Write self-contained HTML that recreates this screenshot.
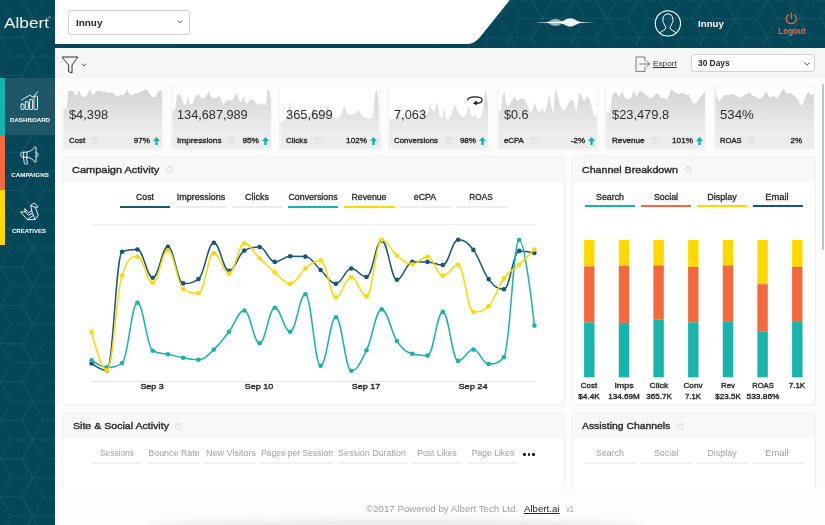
<!DOCTYPE html>
<html lang="en"><head><meta charset="utf-8"><title>Albert - Dashboard</title>
<style>

*{box-sizing:border-box;margin:0;padding:0}
html,body{width:825px;height:525px;overflow:hidden;background:#fcfcfc;font-family:"Liberation Sans", sans-serif;}
#app{position:relative;width:825px;height:525px;overflow:hidden;background:#fcfcfc}
.abs{position:absolute}
.t{position:absolute;white-space:nowrap;display:block}
svg{position:absolute;overflow:visible}
#sidebar{left:0;top:0;width:55px;height:525px;background:#054758;z-index:5}
#topbar{left:55px;top:0;width:770px;height:44.2px;background:#fff}
#topline{left:55px;top:44.2px;width:770px;height:3.5px;background:#054758}
#toolbar{left:55px;top:47.7px;width:770px;height:30.6px;background:#f6f6f6}
.sel{background:#fff;border:1px solid #d2d2d2;border-radius:3px}
.card{top:86px;width:101.4px;height:64px;background:#fff;border-radius:2.5px;overflow:hidden}
.card .foot{left:0;bottom:0;width:100%;height:19.8px;background:#ececec}
.panel{background:#fff;border:1px solid #f0f0f0;border-radius:3px;overflow:hidden}
.panel .hd{left:0;top:0;width:100%;background:#f8f8f8}
.q{position:absolute;width:7px;height:7px;border:0.7px solid #dcdcdc;border-radius:50%;font-size:4.5px;line-height:5.6px;text-align:center;color:#d4d4d4;font-style:normal}
.ul{position:absolute;height:2px}

</style></head><body><div id="app">
<nav id="sidebar" class="abs">
<svg width="55" height="525" style="left:0;top:0"><defs><pattern id="hx1" width="64.20" height="38.30" patternUnits="userSpaceOnUse" patternTransform="translate(22,18.15)"><path d="M42.80,19.15 L32.10,38.30 L10.70,38.30 L0.00,19.15 L10.70,0.00 L32.10,0.00ZM21.40,19.15L42.80,19.15M21.40,19.15L10.70,38.30M21.40,19.15L10.70,0.00M74.90,0.00 L64.20,19.15 L42.80,19.15 L32.10,0.00 L42.80,-19.15 L64.20,-19.15ZM53.50,0.00L74.90,0.00M53.50,0.00L42.80,19.15M53.50,0.00L42.80,-19.15M74.90,38.30 L64.20,57.45 L42.80,57.45 L32.10,38.30 L42.80,19.15 L64.20,19.15ZM53.50,38.30L74.90,38.30M53.50,38.30L42.80,57.45M53.50,38.30L42.80,19.15M10.70,0.00 L0.00,19.15 L-21.40,19.15 L-32.10,0.00 L-21.40,-19.15 L0.00,-19.15ZM-10.70,0.00L10.70,0.00M-10.70,0.00L-21.40,19.15M-10.70,0.00L-21.40,-19.15M10.70,38.30 L0.00,57.45 L-21.40,57.45 L-32.10,38.30 L-21.40,19.15 L0.00,19.15ZM-10.70,38.30L10.70,38.30M-10.70,38.30L-21.40,57.45M-10.70,38.30L-21.40,19.15" fill="none" stroke="#1b5968" stroke-width="0.6"/></pattern></defs><rect width="55" height="525" fill="url(#hx1)"/></svg>
<div class="abs" style="left:0;top:78px;width:55px;height:57px;background:#215a6a;opacity:0.9"></div>
<div class="abs" style="left:0;top:78px;width:4.5px;height:57px;background:#16b4aa"></div>
<div class="abs" style="left:0;top:135px;width:4.5px;height:55px;background:#f4693c"></div>
<div class="abs" style="left:0;top:190px;width:4.5px;height:55px;background:#fdd900"></div>
<span class="t" style="top:14.72px;font-size:15.1px;line-height:15.1px;font-weight:400;color:#f4f8f9;left:3.80px;transform:scaleX(1.141);transform-origin:left center;">Albert</span>
<span class="t" style="top:16.79px;font-size:3.2px;line-height:3.2px;font-weight:400;color:#fff;left:48.20px;">&#174;</span>
<svg width="20" height="20" viewBox="0 0 20 20" style="left:20px;top:91px" fill="none" stroke="#fff" stroke-width="0.9" stroke-linecap="round" stroke-linejoin="round"><path d="M1.5,9.1 L9.8,4.1 L13.1,6.3 L17.6,0.8"/><rect x="1" y="13" width="3" height="5.5" rx="0.6"/><rect x="5.3" y="10.8" width="3" height="7.700" rx="0.6"/><rect x="9.6" y="8.500" width="3" height="10" rx="0.6"/><rect x="14" y="5.200" width="3.500" height="13.300" rx="0.6"/></svg>
<span class="t" style="top:117.45px;font-size:6.2px;line-height:6.2px;font-weight:700;color:#fff;left:-120.50px;width:300px;text-align:center;transform:scaleX(0.997);transform-origin:center center;">DASHBOARD</span>
<svg width="20" height="20" viewBox="0 0 20 20" style="left:20px;top:146px" fill="none" stroke="#fff" stroke-width="0.9" stroke-linecap="round" stroke-linejoin="round"><path d="M6.6,6.2 C10.5,5.6 13.2,3.4 14.8,0.8 C15.6,0.6 16,1.2 16,2 L16,15 C16,16 15.4,16.4 14.8,16.2 C13.2,13.4 10.5,11.6 6.6,11.2"/><path d="M6.6,6.2 H2.6 C1.2,6.2 0.8,7.4 0.8,8.7 C0.8,10 1.2,11.2 2.6,11.2 H6.6 Z"/><path d="M3.6,6.4V11"/><path d="M3.4,11.4 L4.4,17.4 C4.6,18 5,18.2 5.6,18.2 H6.8 C7.4,18.2 7.6,17.8 7.4,17.2 L6.4,11.4"/><path d="M16.2,6.6 C17.6,6.8 18.2,7.8 18.2,8.6 C18.2,9.6 17.6,10.4 16.2,10.6"/></svg>
<span class="t" style="top:172.35px;font-size:6.2px;line-height:6.2px;font-weight:700;color:#fff;left:-120.50px;width:300px;text-align:center;transform:scaleX(1.006);transform-origin:center center;">CAMPAIGNS</span>
<svg width="20" height="20" viewBox="0 0 20 20" style="left:20px;top:202px" fill="none" stroke="#fff" stroke-width="0.9" stroke-linecap="round" stroke-linejoin="round"><path d="M0.8,10.2 L7.4,17.6 H15 L18.2,13.4 L15.4,5.4 L18.2,5 L14,0.8 L10.8,3.6 L11.6,8.6 L8.8,10.8 L4.6,6.6 L5.4,9.6 Z"/><path d="M10.8,3.6 L15.4,5.4 M11.6,8.6 L15,17.6 M5.4,9.6 L8.2,13.2 L11.8,11.6 M7.4,17.6 L13,13.6"/></svg>
<span class="t" style="top:227.75px;font-size:6.2px;line-height:6.2px;font-weight:700;color:#fff;left:-120.60px;width:300px;text-align:center;transform:scaleX(0.970);transform-origin:center center;">CREATIVES</span>
</nav>
<header id="topbar" class="abs"></header><div id="topline" class="abs"></div>
<svg width="825" height="48" viewBox="0 0 825 48" style="left:0;top:0"><defs><pattern id="hx2" width="64.20" height="38.30" patternUnits="userSpaceOnUse" patternTransform="translate(50.2,-0.55)"><path d="M42.80,19.15 L32.10,38.30 L10.70,38.30 L0.00,19.15 L10.70,0.00 L32.10,0.00ZM21.40,19.15L42.80,19.15M21.40,19.15L10.70,38.30M21.40,19.15L10.70,0.00M74.90,0.00 L64.20,19.15 L42.80,19.15 L32.10,0.00 L42.80,-19.15 L64.20,-19.15ZM53.50,0.00L74.90,0.00M53.50,0.00L42.80,19.15M53.50,0.00L42.80,-19.15M74.90,38.30 L64.20,57.45 L42.80,57.45 L32.10,38.30 L42.80,19.15 L64.20,19.15ZM53.50,38.30L74.90,38.30M53.50,38.30L42.80,57.45M53.50,38.30L42.80,19.15M10.70,0.00 L0.00,19.15 L-21.40,19.15 L-32.10,0.00 L-21.40,-19.15 L0.00,-19.15ZM-10.70,0.00L10.70,0.00M-10.70,0.00L-21.40,19.15M-10.70,0.00L-21.40,-19.15M10.70,38.30 L0.00,57.45 L-21.40,57.45 L-32.10,38.30 L-21.40,19.15 L0.00,19.15ZM-10.70,38.30L10.70,38.30M-10.70,38.30L-21.40,57.45M-10.70,38.30L-21.40,19.15" fill="none" stroke="#1b5968" stroke-width="0.6"/></pattern><clipPath id="hc"><path d="M509.8,0 L485,31 C479.5,38 475,44.3 466,44.3 L440,44.3 L440,47.7 L825,47.7 L825,0 Z"/></clipPath><radialGradient id="gl" cx="50%" cy="50%" r="50%"><stop offset="0" stop-color="#fff" stop-opacity="0.95"/><stop offset="1" stop-color="#fff" stop-opacity="0"/></radialGradient><filter id="bl" x="-20%" y="-50%" width="140%" height="200%"><feGaussianBlur stdDeviation="0.35"/></filter></defs><path d="M509.8,0 L485,31 C479.5,38 475,44.3 466,44.3 L440,44.3 L440,47.7 L825,47.7 L825,0 Z" fill="#054758"/><g clip-path="url(#hc)"><rect x="440" y="0" width="385" height="44" fill="url(#hx2)"/></g><path d="M533.5,22.4 Q564.5,21.2 595.5,22.4 Q564.5,23.600 533.5,22.4Z" fill="#d5e3e6"/><path d="M544.5,22.4 C550,21.8 551,18.9 555.5,18.9 C560,18.9 561,21.8 566.5,22.4 C561,23 560,25.900 555.5,25.900 C551,25.900 550,23 544.5,22.4Z" fill="#fff" fill-opacity="0.6" filter="url(#bl)"/><path d="M558,22.4 C564.5,21.600 565.5,18.300 570.2,18.300 C575,18.300 576,21.600 583,22.4 C576,23.200 575,26.500 570.2,26.500 C565.5,26.500 564.5,23.200 558,22.4Z" fill="#fff" fill-opacity="0.92" filter="url(#bl)"/><circle cx="667.9" cy="23.4" r="12.6" fill="none" stroke="#fff" stroke-width="1.1"/><path d="M660.3,32.4 C662,30.6 665.8,30 665.8,27.8 C665.8,26.5 664.6,25.8 663.9,23.5 C663.2,22.8 662.7,21 662.9,19 C663.1,15.8 665.2,13.9 667.9,13.9 C670.6,13.9 672.7,15.8 672.9,19 C673.1,21 672.6,22.8 671.9,23.500 C671.200,25.800 670,26.500 670,27.800 C670,30 673.800,30.600 675.500,32.400" fill="none" stroke="#fff" stroke-width="1" stroke-linejoin="round" stroke-linecap="round"/><path d="M788.4,14.8 a4.9,4.9 0 1 0 5.6,0" fill="none" stroke="#f4693c" stroke-width="1.2" stroke-linecap="round"/><path d="M791.2,13v5.3" stroke="#f4693c" stroke-width="1.2" stroke-linecap="round"/></svg>
<span class="t" style="top:19.29px;font-size:9.7px;line-height:9.7px;font-weight:700;color:#fff;left:697.80px;transform:scaleX(1.002);transform-origin:left center;">Innuy</span>
<span class="t" style="top:28.26px;font-size:8.2px;line-height:8.2px;font-weight:700;color:#f4693c;left:641.50px;width:300px;text-align:center;transform:scaleX(0.992);transform-origin:center center;">Logout</span>
<div class="abs sel" style="left:68.4px;top:9.5px;width:121.2px;height:25px"></div>
<span class="t" style="top:17.77px;font-size:9.6px;line-height:9.6px;font-weight:700;color:#262626;left:76.30px;transform:scaleX(1.032);transform-origin:left center;">Innuy</span>
<svg width="8" height="6" viewBox="0 0 8 6" style="left:176.1px;top:19.2px"><path d="M1.8,1.6 L4,3.9 L6.2,1.6" fill="none" stroke="#444" stroke-width="0.9"/></svg>
<div id="toolbar" class="abs"></div>
<svg width="18" height="18" viewBox="0 0 18 18" style="left:61px;top:55.500px" fill="none" stroke="#333" stroke-width="1" stroke-linejoin="round"><path d="M1,1 H17 L11,9 V17 L7.6,15.6 V9 Z"/></svg>
<svg width="6" height="4" viewBox="0 0 6 4" style="left:80.5px;top:62.5px"><path d="M0.8,0.8 L3,3 L5.2,0.8" fill="none" stroke="#444" stroke-width="0.9"/></svg>
<svg width="16" height="16" viewBox="0 0 16 16" style="left:634.5px;top:55.5px" fill="none" stroke="#555" stroke-width="0.75" stroke-linejoin="round" stroke-linecap="round"><path d="M10,5 V1 H1 V15.4 H10 V11"/><path d="M4.8,8 H14.6 M12,5.4 L14.6,8 L12,10.600"/></svg>
<span class="t" style="top:60.38px;font-size:7.7px;line-height:7.7px;font-weight:400;color:#333;left:653.40px;transform:scaleX(1.071);transform-origin:left center;text-decoration:underline;text-decoration-thickness:0.6px;text-underline-offset:1px;">Export</span>
<div class="abs sel" style="left:690.5px;top:54.4px;width:124.3px;height:18.1px"></div>
<span class="t" style="top:59.30px;font-size:8.5px;line-height:8.5px;font-weight:700;color:#262626;left:698.20px;transform:scaleX(0.983);transform-origin:left center;">30 Days</span>
<svg width="8" height="6" viewBox="0 0 8 6" style="left:802.8px;top:61.2px"><path d="M1.3,1.5 L4,4.2 L6.7,1.5" fill="none" stroke="#444" stroke-width="0.9"/></svg>
<section class="abs card" style="left:62.0px">
<svg width="101.4" height="64" viewBox="0 0 101.4 64" style="left:0;top:0"><defs><linearGradient id="cg0" gradientUnits="userSpaceOnUse" x1="0" y1="0" x2="0" y2="64"><stop offset="0" stop-color="#d2d2d2"/><stop offset="0.62" stop-color="#e9e9e9"/><stop offset="1" stop-color="#ececec"/></linearGradient></defs><path d="M0,64 L0.7,24.7 L4.7,22.0 L6.4,5.3 L9.3,4.7 L11.3,5.3 L13.3,9.3 L15.3,8.7 L17.1,4.0 L18.9,9.3 L21.3,10.7 L24.0,10.7 L26.0,7.3 L27.7,3.3 L29.3,7.3 L31.7,8.7 L34.0,5.3 L37.3,4.7 L40.7,6.0 L44.0,6.0 L47.3,6.7 L50.7,6.7 L53.3,9.3 L56.0,10.7 L58.7,8.7 L61.3,9.3 L64.0,6.0 L65.6,2.7 L67.3,8.7 L70.0,9.3 L72.7,7.3 L76.0,7.3 L80.0,5.3 L82.9,3.3 L85.1,4.0 L87.3,7.3 L90.0,10.7 L93.3,11.3 L96.0,6.0 L97.6,4.7 L101.3,5.3 L101.4,64 Z" fill="url(#cg0)" stroke="none"/></svg>
<div class="abs foot"></div>
<svg width="101.4" height="64" viewBox="0 0 101.4 64" style="left:0;top:0"><rect x="0.9" y="0.9" width="99.60000000000001" height="62.2" rx="1.6" fill="none" stroke="#fff" stroke-width="1.1"/><rect x="0.4" y="0.4" width="100.60000000000001" height="63.2" rx="2.2" fill="none" stroke="#eeeeee" stroke-width="0.8"/></svg>
<span class="t" style="top:22.87px;font-size:12.2px;line-height:12.2px;font-weight:400;color:#2e2e2e;left:6.70px;transform:scaleX(1.051);transform-origin:left center;">$4,398</span>
<span class="t" style="top:50.61px;font-size:7.9px;line-height:7.9px;font-weight:400;color:#262626;-webkit-text-stroke:0.35px #262626;left:6.70px;transform:scaleX(0.998);transform-origin:left center;">Cost</span>
<i class="q" style="left:29.3px;top:51.2px">?</i>
<span class="t" style="top:50.61px;font-size:7.9px;line-height:7.9px;font-weight:400;color:#262626;-webkit-text-stroke:0.35px #262626;left:-211.90px;width:300px;text-align:right;transform:scaleX(1.026);transform-origin:right center;">97%</span>
<svg width="7" height="8" viewBox="0 0 7 8" style="left:91.2px;top:51px"><path d="M3.5,0 L7,3.9 H4.700 V8 H2.300 V3.900 H0 Z" fill="#16b4aa"/></svg>
</section>
<section class="abs card" style="left:170.6px">
<svg width="101.4" height="64" viewBox="0 0 101.4 64" style="left:0;top:0"><defs><linearGradient id="cg1" gradientUnits="userSpaceOnUse" x1="0" y1="0" x2="0" y2="64"><stop offset="0" stop-color="#d2d2d2"/><stop offset="0.62" stop-color="#e9e9e9"/><stop offset="1" stop-color="#ececec"/></linearGradient></defs><path d="M0,64 L0.5,24.7 L4.1,24.0 L5.8,9.3 L8.7,8.7 L10.7,12.7 L13.4,19.3 L15.4,18.0 L17.0,10.0 L18.7,18.0 L21.4,18.0 L24.1,11.3 L27.4,8.0 L30.3,12.0 L33.4,12.0 L36.1,8.7 L38.1,5.3 L40.1,11.3 L42.7,12.7 L46.1,11.3 L48.7,10.0 L50.7,15.3 L52.7,19.3 L54.7,14.7 L58.1,14.0 L60.7,14.7 L63.4,11.3 L65.8,7.3 L68.1,14.0 L70.1,16.7 L72.5,10.0 L74.3,16.7 L76.7,18.0 L79.1,12.7 L82.1,14.0 L84.7,16.7 L87.4,18.7 L90.7,17.3 L93.4,19.3 L95.1,18.0 L96.7,4.0 L98.1,3.3 L99.7,12.7 L101.4,18.0 L101.4,64 Z" fill="url(#cg1)" stroke="none"/></svg>
<div class="abs foot"></div>
<svg width="101.4" height="64" viewBox="0 0 101.4 64" style="left:0;top:0"><rect x="0.9" y="0.9" width="99.60000000000001" height="62.2" rx="1.6" fill="none" stroke="#fff" stroke-width="1.1"/><rect x="0.4" y="0.4" width="100.60000000000001" height="63.2" rx="2.2" fill="none" stroke="#eeeeee" stroke-width="0.8"/></svg>
<span class="t" style="top:22.87px;font-size:12.2px;line-height:12.2px;font-weight:400;color:#2e2e2e;left:6.70px;transform:scaleX(1.043);transform-origin:left center;">134,687,989</span>
<span class="t" style="top:50.61px;font-size:7.9px;line-height:7.9px;font-weight:400;color:#262626;-webkit-text-stroke:0.35px #262626;left:6.70px;transform:scaleX(1.048);transform-origin:left center;">Impressions</span>
<i class="q" style="left:57.7px;top:51.2px">?</i>
<span class="t" style="top:50.61px;font-size:7.9px;line-height:7.9px;font-weight:400;color:#262626;-webkit-text-stroke:0.35px #262626;left:-211.90px;width:300px;text-align:right;transform:scaleX(1.051);transform-origin:right center;">95%</span>
<svg width="7" height="8" viewBox="0 0 7 8" style="left:91.2px;top:51px"><path d="M3.5,0 L7,3.9 H4.700 V8 H2.300 V3.900 H0 Z" fill="#16b4aa"/></svg>
</section>
<section class="abs card" style="left:279.3px">
<svg width="101.4" height="64" viewBox="0 0 101.4 64" style="left:0;top:0"><defs><linearGradient id="cg2" gradientUnits="userSpaceOnUse" x1="0" y1="0" x2="0" y2="64"><stop offset="0" stop-color="#d2d2d2"/><stop offset="0.62" stop-color="#e9e9e9"/><stop offset="1" stop-color="#ececec"/></linearGradient></defs><path d="M0,64 L0.0,35.3 L3.7,36.0 L6.1,32.7 L8.4,30.0 L10.4,15.3 L12.4,29.3 L15.7,30.7 L19.7,30.7 L24.4,30.7 L30.4,30.0 L32.8,26.0 L34.6,19.3 L36.4,26.7 L39.0,28.0 L41.7,20.0 L43.4,26.7 L46.4,26.0 L48.4,18.7 L50.4,26.7 L53.0,29.3 L56.4,31.3 L59.0,34.0 L62.4,28.0 L65.3,19.3 L67.7,26.7 L70.4,29.3 L74.4,28.0 L77.0,26.7 L79.7,24.0 L82.4,29.3 L86.4,32.0 L90.4,33.3 L93.7,31.3 L95.7,11.3 L97.3,2.7 L99.0,11.3 L101.0,31.3 L101.4,64 Z" fill="url(#cg2)" stroke="none"/></svg>
<div class="abs foot"></div>
<svg width="101.4" height="64" viewBox="0 0 101.4 64" style="left:0;top:0"><rect x="0.9" y="0.9" width="99.60000000000001" height="62.2" rx="1.6" fill="none" stroke="#fff" stroke-width="1.1"/><rect x="0.4" y="0.4" width="100.60000000000001" height="63.2" rx="2.2" fill="none" stroke="#eeeeee" stroke-width="0.8"/></svg>
<span class="t" style="top:22.87px;font-size:12.2px;line-height:12.2px;font-weight:400;color:#2e2e2e;left:6.70px;transform:scaleX(1.060);transform-origin:left center;">365,699</span>
<span class="t" style="top:50.61px;font-size:7.9px;line-height:7.9px;font-weight:400;color:#262626;-webkit-text-stroke:0.35px #262626;left:6.70px;transform:scaleX(1.017);transform-origin:left center;">Clicks</span>
<i class="q" style="left:34.5px;top:51.2px">?</i>
<span class="t" style="top:50.61px;font-size:7.9px;line-height:7.9px;font-weight:400;color:#262626;-webkit-text-stroke:0.35px #262626;left:-211.90px;width:300px;text-align:right;transform:scaleX(1.035);transform-origin:right center;">102%</span>
<svg width="7" height="8" viewBox="0 0 7 8" style="left:91.2px;top:51px"><path d="M3.5,0 L7,3.9 H4.700 V8 H2.300 V3.900 H0 Z" fill="#16b4aa"/></svg>
</section>
<section class="abs card" style="left:387.6px">
<svg width="101.4" height="64" viewBox="0 0 101.4 64" style="left:0;top:0"><defs><linearGradient id="cg3" gradientUnits="userSpaceOnUse" x1="0" y1="0" x2="0" y2="64"><stop offset="0" stop-color="#d2d2d2"/><stop offset="0.62" stop-color="#e9e9e9"/><stop offset="1" stop-color="#ececec"/></linearGradient></defs><path d="M0,64 L0.0,33.3 L4.7,33.3 L8.7,32.0 L10.7,18.0 L12.5,31.3 L16.7,32.0 L22.1,32.0 L27.4,31.3 L32.1,28.7 L34.7,20.0 L36.7,26.7 L39.4,28.7 L42.1,18.7 L44.1,24.0 L46.7,26.7 L49.0,15.3 L51.4,28.7 L54.1,32.7 L56.1,21.3 L58.1,33.3 L60.7,34.0 L64.1,26.7 L66.7,18.7 L69.4,24.7 L72.1,29.3 L75.4,30.7 L78.1,29.3 L80.7,19.3 L82.7,28.0 L84.7,31.3 L87.4,28.7 L89.4,33.3 L92.7,32.0 L95.4,22.0 L97.4,2.7 L99.1,11.3 L101.4,31.3 L101.4,64 Z" fill="url(#cg3)" stroke="none"/></svg>
<div class="abs foot"></div>
<svg width="101.4" height="64" viewBox="0 0 101.4 64" style="left:0;top:0"><rect x="0.9" y="0.9" width="99.60000000000001" height="62.2" rx="1.6" fill="none" stroke="#fff" stroke-width="1.1"/><rect x="0.4" y="0.4" width="100.60000000000001" height="63.2" rx="2.2" fill="none" stroke="#eeeeee" stroke-width="0.8"/></svg>
<span class="t" style="top:22.87px;font-size:12.2px;line-height:12.2px;font-weight:400;color:#2e2e2e;left:6.70px;transform:scaleX(1.049);transform-origin:left center;">7,063</span>
<span class="t" style="top:50.61px;font-size:7.9px;line-height:7.9px;font-weight:400;color:#262626;-webkit-text-stroke:0.35px #262626;left:6.70px;transform:scaleX(1.003);transform-origin:left center;">Conversions</span>
<i class="q" style="left:57.1px;top:51.2px">?</i>
<span class="t" style="top:50.61px;font-size:7.9px;line-height:7.9px;font-weight:400;color:#262626;-webkit-text-stroke:0.35px #262626;left:-211.90px;width:300px;text-align:right;transform:scaleX(1.019);transform-origin:right center;">98%</span>
<svg width="7" height="8" viewBox="0 0 7 8" style="left:91.2px;top:51px"><path d="M3.5,0 L7,3.9 H4.700 V8 H2.300 V3.900 H0 Z" fill="#16b4aa"/></svg>
</section>
<section class="abs card" style="left:496.9px">
<svg width="101.4" height="64" viewBox="0 0 101.4 64" style="left:0;top:0"><defs><linearGradient id="cg4" gradientUnits="userSpaceOnUse" x1="0" y1="0" x2="0" y2="64"><stop offset="0" stop-color="#d2d2d2"/><stop offset="0.62" stop-color="#e9e9e9"/><stop offset="1" stop-color="#ececec"/></linearGradient></defs><path d="M0,64 L0.0,25.3 L3.8,24.7 L5.8,10.0 L7.4,6.0 L9.1,18.0 L11.8,20.0 L14.4,15.3 L17.5,10.7 L20.4,14.7 L23.1,12.7 L27.1,12.7 L30.0,18.0 L33.1,26.7 L35.8,24.0 L38.0,16.7 L40.4,24.7 L42.8,26.0 L45.1,22.0 L47.4,27.3 L49.8,20.7 L52.2,7.3 L54.0,20.7 L56.2,26.7 L57.8,11.3 L59.1,2.7 L61.1,12.7 L63.8,21.3 L66.4,25.3 L69.1,22.7 L71.8,16.7 L74.4,13.3 L76.4,14.7 L79.1,26.7 L81.1,15.3 L83.1,6.0 L85.5,13.3 L87.8,14.7 L90.0,10.0 L93.1,14.0 L95.8,24.7 L97.8,32.0 L101.4,24.7 L101.4,64 Z" fill="url(#cg4)" stroke="none"/></svg>
<div class="abs foot"></div>
<svg width="101.4" height="64" viewBox="0 0 101.4 64" style="left:0;top:0"><rect x="0.9" y="0.9" width="99.60000000000001" height="62.2" rx="1.6" fill="none" stroke="#fff" stroke-width="1.1"/><rect x="0.4" y="0.4" width="100.60000000000001" height="63.2" rx="2.2" fill="none" stroke="#eeeeee" stroke-width="0.8"/></svg>
<span class="t" style="top:22.87px;font-size:12.2px;line-height:12.2px;font-weight:400;color:#2e2e2e;left:6.70px;transform:scaleX(1.036);transform-origin:left center;">$0.6</span>
<span class="t" style="top:50.61px;font-size:7.9px;line-height:7.9px;font-weight:400;color:#262626;-webkit-text-stroke:0.35px #262626;left:6.70px;transform:scaleX(0.988);transform-origin:left center;">eCPA</span>
<i class="q" style="left:32.9px;top:51.2px">?</i>
<span class="t" style="top:50.61px;font-size:7.9px;line-height:7.9px;font-weight:400;color:#262626;-webkit-text-stroke:0.35px #262626;left:-211.90px;width:300px;text-align:right;transform:scaleX(1.011);transform-origin:right center;">-2%</span>
<svg width="7" height="8" viewBox="0 0 7 8" style="left:91.2px;top:51px"><path d="M3.5,0 L7,3.9 H4.700 V8 H2.300 V3.900 H0 Z" fill="#16b4aa"/></svg>
</section>
<section class="abs card" style="left:604.9px">
<svg width="101.4" height="64" viewBox="0 0 101.4 64" style="left:0;top:0"><defs><linearGradient id="cg5" gradientUnits="userSpaceOnUse" x1="0" y1="0" x2="0" y2="64"><stop offset="0" stop-color="#d2d2d2"/><stop offset="0.62" stop-color="#e9e9e9"/><stop offset="1" stop-color="#ececec"/></linearGradient></defs><path d="M0,64 L0.0,27.1 L5.3,26.4 L6.7,11.1 L9.6,6.0 L12.6,8.2 L14.0,11.8 L16.9,5.3 L19.1,10.4 L22.0,13.3 L25.6,12.5 L28.6,5.3 L31.5,10.4 L35.1,4.5 L38.7,7.5 L43.1,10.4 L46.7,12.5 L50.4,8.2 L53.3,7.5 L56.2,12.5 L59.1,11.8 L62.0,14.0 L66.4,3.1 L69.3,6.0 L73.6,8.2 L78.0,6.7 L80.9,8.9 L83.8,8.2 L88.2,17.6 L91.1,16.9 L95.5,11.1 L100.6,5.3 L101.4,6.7 L101.4,64 Z" fill="url(#cg5)" stroke="none"/></svg>
<div class="abs foot"></div>
<svg width="101.4" height="64" viewBox="0 0 101.4 64" style="left:0;top:0"><rect x="0.9" y="0.9" width="99.60000000000001" height="62.2" rx="1.6" fill="none" stroke="#fff" stroke-width="1.1"/><rect x="0.4" y="0.4" width="100.60000000000001" height="63.2" rx="2.2" fill="none" stroke="#eeeeee" stroke-width="0.8"/></svg>
<span class="t" style="top:22.87px;font-size:12.2px;line-height:12.2px;font-weight:400;color:#2e2e2e;left:6.70px;transform:scaleX(1.053);transform-origin:left center;">$23,479.8</span>
<span class="t" style="top:50.61px;font-size:7.9px;line-height:7.9px;font-weight:400;color:#262626;-webkit-text-stroke:0.35px #262626;left:6.70px;transform:scaleX(1.029);transform-origin:left center;">Revenue</span>
<i class="q" style="left:45.6px;top:51.2px">?</i>
<span class="t" style="top:50.61px;font-size:7.9px;line-height:7.9px;font-weight:400;color:#262626;-webkit-text-stroke:0.35px #262626;left:-211.90px;width:300px;text-align:right;transform:scaleX(1.040);transform-origin:right center;">101%</span>
<svg width="7" height="8" viewBox="0 0 7 8" style="left:91.2px;top:51px"><path d="M3.5,0 L7,3.9 H4.700 V8 H2.300 V3.900 H0 Z" fill="#16b4aa"/></svg>
</section>
<section class="abs card" style="left:713.6px">
<svg width="101.4" height="64" viewBox="0 0 101.4 64" style="left:0;top:0"><defs><linearGradient id="cg6" gradientUnits="userSpaceOnUse" x1="0" y1="0" x2="0" y2="64"><stop offset="0" stop-color="#d2d2d2"/><stop offset="0.62" stop-color="#e9e9e9"/><stop offset="1" stop-color="#ececec"/></linearGradient></defs><path d="M0,64 L0.0,1.3 L1.0,1.3 L2.7,11.3 L4.7,16.0 L7.4,12.7 L10.7,8.7 L14.1,9.3 L18.1,8.0 L22.1,10.0 L26.1,12.0 L30.1,9.3 L33.4,8.0 L35.4,6.0 L38.1,9.3 L41.4,10.7 L45.4,13.3 L48.1,11.3 L50.7,8.0 L52.7,6.0 L54.7,10.0 L57.4,11.3 L60.1,10.0 L62.7,12.7 L64.7,10.0 L67.4,5.3 L69.8,2.7 L72.1,7.3 L74.7,8.0 L76.7,6.7 L80.1,10.0 L83.4,12.7 L86.1,18.0 L88.1,19.3 L90.1,15.3 L92.7,8.0 L94.7,6.0 L96.7,9.3 L99.4,8.7 L101.4,5.3 L101.4,64 Z" fill="url(#cg6)" stroke="none"/></svg>
<div class="abs foot"></div>
<svg width="101.4" height="64" viewBox="0 0 101.4 64" style="left:0;top:0"><rect x="0.9" y="0.9" width="99.60000000000001" height="62.2" rx="1.6" fill="none" stroke="#fff" stroke-width="1.1"/><rect x="0.4" y="0.4" width="100.60000000000001" height="63.2" rx="2.2" fill="none" stroke="#eeeeee" stroke-width="0.8"/></svg>
<span class="t" style="top:22.87px;font-size:12.2px;line-height:12.2px;font-weight:400;color:#2e2e2e;left:6.70px;transform:scaleX(1.088);transform-origin:left center;">534%</span>
<span class="t" style="top:50.61px;font-size:7.9px;line-height:7.9px;font-weight:400;color:#262626;-webkit-text-stroke:0.35px #262626;left:6.70px;transform:scaleX(0.965);transform-origin:left center;">ROAS</span>
<i class="q" style="left:34.7px;top:51.2px">?</i>
<span class="t" style="top:50.61px;font-size:7.9px;line-height:7.9px;font-weight:400;color:#262626;-webkit-text-stroke:0.35px #262626;left:-211.90px;width:300px;text-align:right;transform:scaleX(1.008);transform-origin:right center;">2%</span>
</section>
<svg width="16" height="9" viewBox="0 0 16 9" style="left:467px;top:95.5px" fill="none" stroke="#1a1a1a" stroke-width="1.25" stroke-linecap="round" stroke-linejoin="round"><path d="M8.6,7.3 C12.6,7.2 15.1,5.9 15.1,3.9 C15.1,1.7 11.8,0.7 8,0.8 C4.2,0.9 0.9,2 0.5,4"/><path d="M9.2,5.5 L6.6,7.3 L9.4,8.5 Z" fill="#1a1a1a" stroke-width="0.9"/></svg>
<section class="abs panel" style="left:62px;top:156px;width:502.5px;height:249px">
<div class="abs hd" style="height:25px"></div>
</section>
<span class="t" style="top:164.60px;font-size:9.8px;line-height:9.8px;font-weight:400;color:#262626;-webkit-text-stroke:0.35px #262626;left:72.30px;transform:scaleX(1.121);transform-origin:left center;">Campaign Activity</span>
<i class="q" style="left:165.9px;top:166.1px">?</i>
<span class="t" style="top:192.87px;font-size:8.9px;line-height:8.9px;font-weight:400;color:#262626;-webkit-text-stroke:0.3px #262626;left:-4.90px;width:300px;text-align:center;transform:scaleX(0.981);transform-origin:center center;">Cost</span>
<i class="ul" style="left:119.8px;top:205.6px;width:50.600px;background:#17577a"></i>
<span class="t" style="top:192.87px;font-size:8.9px;line-height:8.9px;font-weight:400;color:#262626;-webkit-text-stroke:0.3px #262626;left:51.15px;width:300px;text-align:center;transform:scaleX(1.016);transform-origin:center center;">Impressions</span>
<i class="ul" style="left:175.8px;top:205.6px;width:50.600px;background:#ececec"></i>
<span class="t" style="top:192.87px;font-size:8.9px;line-height:8.9px;font-weight:400;color:#262626;-webkit-text-stroke:0.3px #262626;left:107.20px;width:300px;text-align:center;transform:scaleX(1.005);transform-origin:center center;">Clicks</span>
<i class="ul" style="left:231.9px;top:205.6px;width:50.600px;background:#ececec"></i>
<span class="t" style="top:192.87px;font-size:8.9px;line-height:8.9px;font-weight:400;color:#262626;-webkit-text-stroke:0.3px #262626;left:163.25px;width:300px;text-align:center;transform:scaleX(0.997);transform-origin:center center;">Conversions</span>
<i class="ul" style="left:287.9px;top:205.6px;width:50.600px;background:#16b4aa"></i>
<span class="t" style="top:192.87px;font-size:8.9px;line-height:8.9px;font-weight:400;color:#262626;-webkit-text-stroke:0.3px #262626;left:219.30px;width:300px;text-align:center;transform:scaleX(0.982);transform-origin:center center;">Revenue</span>
<i class="ul" style="left:344.0px;top:205.6px;width:50.600px;background:#fdd900"></i>
<span class="t" style="top:192.87px;font-size:8.9px;line-height:8.9px;font-weight:400;color:#262626;-webkit-text-stroke:0.3px #262626;left:275.35px;width:300px;text-align:center;transform:scaleX(0.994);transform-origin:center center;">eCPA</span>
<i class="ul" style="left:400.1px;top:205.6px;width:50.600px;background:#ececec"></i>
<span class="t" style="top:192.87px;font-size:8.9px;line-height:8.9px;font-weight:400;color:#262626;-webkit-text-stroke:0.3px #262626;left:331.40px;width:300px;text-align:center;transform:scaleX(0.926);transform-origin:center center;">ROAS</span>
<i class="ul" style="left:456.1px;top:205.6px;width:50.600px;background:#ececec"></i>
<svg width="825" height="525" viewBox="0 0 825 525" style="left:0;top:0">
<path d="M91,224.800 H535.500" stroke="#ececec" stroke-width="1"/><path d="M91,381.500 H535.500" stroke="#e4e4e4" stroke-width="1"/>
<path d="M91.6,363.4C91.6,363.4 100.8,370.4 106.9,370.4C113.0,370.4 116.0,253.9 122.1,251.7C128.2,249.5 131.3,249.5 137.4,249.5C143.5,249.5 146.6,277.7 152.7,277.7C158.8,277.7 161.8,246.7 167.9,246.7C174.1,246.7 177.1,283.4 183.2,283.4C189.3,283.4 192.4,283.4 198.5,279.1C204.6,274.8 207.7,242.8 213.8,242.8C219.9,242.8 222.9,270.7 229.0,270.7C235.1,270.7 238.2,254.1 244.3,250.6C250.4,247.1 253.5,247.1 259.6,247.1C265.7,247.1 268.7,261.9 274.8,261.9C280.9,261.9 284.0,256.2 290.1,256.2C296.2,256.2 299.3,256.2 305.4,256.6C311.5,257.0 314.5,264.6 320.6,270.0C326.8,275.4 329.8,283.7 335.9,283.7C342.0,283.7 345.1,268.5 351.2,268.5C357.3,268.5 360.4,277.0 366.5,277.0C372.6,277.0 375.6,240.4 381.7,240.4C387.8,240.4 390.9,279.8 397.0,279.8C403.1,279.8 406.2,261.9 412.3,261.9C418.4,261.9 421.4,261.9 427.5,261.9C433.6,261.9 436.7,265.0 442.8,265.0C448.9,265.0 452.0,239.7 458.1,239.7C464.2,239.7 467.2,242.0 473.4,249.9C479.5,257.8 482.5,271.2 488.6,279.1C494.7,287.0 497.8,289.3 503.9,289.3C510.0,289.3 513.1,250.9 519.2,250.9C525.3,250.9 534.4,253.0 534.4,253.0" fill="none" stroke="#17577a" stroke-width="1.5" stroke-linejoin="round" stroke-linecap="round"/><circle cx="91.6" cy="363.4" r="2.3" fill="#17577a"/><circle cx="106.9" cy="370.4" r="2.3" fill="#17577a"/><circle cx="122.1" cy="251.7" r="2.3" fill="#17577a"/><circle cx="137.4" cy="249.5" r="2.3" fill="#17577a"/><circle cx="152.7" cy="277.7" r="2.3" fill="#17577a"/><circle cx="167.9" cy="246.7" r="2.3" fill="#17577a"/><circle cx="183.2" cy="283.4" r="2.3" fill="#17577a"/><circle cx="198.5" cy="279.1" r="2.3" fill="#17577a"/><circle cx="213.8" cy="242.8" r="2.3" fill="#17577a"/><circle cx="229.0" cy="270.7" r="2.3" fill="#17577a"/><circle cx="244.3" cy="250.6" r="2.3" fill="#17577a"/><circle cx="259.6" cy="247.1" r="2.3" fill="#17577a"/><circle cx="274.8" cy="261.9" r="2.3" fill="#17577a"/><circle cx="290.1" cy="256.2" r="2.3" fill="#17577a"/><circle cx="305.4" cy="256.6" r="2.3" fill="#17577a"/><circle cx="320.6" cy="270.0" r="2.3" fill="#17577a"/><circle cx="335.9" cy="283.7" r="2.3" fill="#17577a"/><circle cx="351.2" cy="268.5" r="2.3" fill="#17577a"/><circle cx="366.5" cy="277.0" r="2.3" fill="#17577a"/><circle cx="381.7" cy="240.4" r="2.3" fill="#17577a"/><circle cx="397.0" cy="279.8" r="2.3" fill="#17577a"/><circle cx="412.3" cy="261.9" r="2.3" fill="#17577a"/><circle cx="427.5" cy="261.9" r="2.3" fill="#17577a"/><circle cx="442.8" cy="265.0" r="2.3" fill="#17577a"/><circle cx="458.1" cy="239.7" r="2.3" fill="#17577a"/><circle cx="473.4" cy="249.9" r="2.3" fill="#17577a"/><circle cx="488.6" cy="279.1" r="2.3" fill="#17577a"/><circle cx="503.9" cy="289.3" r="2.3" fill="#17577a"/><circle cx="519.2" cy="250.9" r="2.3" fill="#17577a"/><circle cx="534.4" cy="253.0" r="2.3" fill="#17577a"/>
<path d="M91.6,360.2C91.6,360.2 100.8,367.2 106.9,367.2C113.0,367.2 116.0,367.2 122.1,363.0C128.2,358.8 131.3,302.8 137.4,302.8C143.5,302.8 146.6,347.2 152.7,350.7C158.8,354.2 161.8,352.8 167.9,354.2C174.1,355.6 177.1,356.6 183.2,357.7C189.3,358.8 192.4,359.8 198.5,359.8C204.6,359.8 207.7,355.2 213.8,349.6C219.9,344.0 222.9,339.5 229.0,331.7C235.1,323.9 238.2,310.5 244.3,310.5C250.4,310.5 253.5,343.3 259.6,343.3C265.7,343.3 268.7,307.7 274.8,307.7C280.9,307.7 284.0,331.7 290.1,331.7C296.2,331.7 299.3,294.3 305.4,294.3C311.5,294.3 314.5,365.8 320.6,365.8C326.8,365.8 329.8,317.2 335.9,317.2C342.0,317.2 345.1,370.7 351.2,370.7C357.3,370.7 360.4,362.6 366.5,350.3C372.6,338.0 375.6,309.4 381.7,309.4C387.8,309.4 390.9,332.2 397.0,341.1C403.1,350.0 406.2,352.0 412.3,353.8C418.4,355.6 421.4,355.6 427.5,355.6C433.6,355.6 436.7,311.9 442.8,311.9C448.9,311.9 452.0,360.9 458.1,360.9C464.2,360.9 467.2,349.6 473.4,349.6C479.5,349.6 482.5,364.0 488.6,364.0C494.7,364.0 497.8,364.0 503.9,357.3C510.0,350.6 513.1,240.0 519.2,240.0C525.3,240.0 534.4,325.6 534.4,325.6" fill="none" stroke="#16b4aa" stroke-width="1.5" stroke-linejoin="round" stroke-linecap="round"/><circle cx="91.6" cy="360.2" r="2.3" fill="#16b4aa"/><circle cx="106.9" cy="367.2" r="2.3" fill="#16b4aa"/><circle cx="122.1" cy="363.0" r="2.3" fill="#16b4aa"/><circle cx="137.4" cy="302.8" r="2.3" fill="#16b4aa"/><circle cx="152.7" cy="350.7" r="2.3" fill="#16b4aa"/><circle cx="167.9" cy="354.2" r="2.3" fill="#16b4aa"/><circle cx="183.2" cy="357.7" r="2.3" fill="#16b4aa"/><circle cx="198.5" cy="359.8" r="2.3" fill="#16b4aa"/><circle cx="213.8" cy="349.6" r="2.3" fill="#16b4aa"/><circle cx="229.0" cy="331.7" r="2.3" fill="#16b4aa"/><circle cx="244.3" cy="310.5" r="2.3" fill="#16b4aa"/><circle cx="259.6" cy="343.3" r="2.3" fill="#16b4aa"/><circle cx="274.8" cy="307.7" r="2.3" fill="#16b4aa"/><circle cx="290.1" cy="331.7" r="2.3" fill="#16b4aa"/><circle cx="305.4" cy="294.3" r="2.3" fill="#16b4aa"/><circle cx="320.6" cy="365.8" r="2.3" fill="#16b4aa"/><circle cx="335.9" cy="317.2" r="2.3" fill="#16b4aa"/><circle cx="351.2" cy="370.7" r="2.3" fill="#16b4aa"/><circle cx="366.5" cy="350.3" r="2.3" fill="#16b4aa"/><circle cx="381.7" cy="309.4" r="2.3" fill="#16b4aa"/><circle cx="397.0" cy="341.1" r="2.3" fill="#16b4aa"/><circle cx="412.3" cy="353.8" r="2.3" fill="#16b4aa"/><circle cx="427.5" cy="355.6" r="2.3" fill="#16b4aa"/><circle cx="442.8" cy="311.9" r="2.3" fill="#16b4aa"/><circle cx="458.1" cy="360.9" r="2.3" fill="#16b4aa"/><circle cx="473.4" cy="349.6" r="2.3" fill="#16b4aa"/><circle cx="488.6" cy="364.0" r="2.3" fill="#16b4aa"/><circle cx="503.9" cy="357.3" r="2.3" fill="#16b4aa"/><circle cx="519.2" cy="240.0" r="2.3" fill="#16b4aa"/><circle cx="534.4" cy="325.6" r="2.3" fill="#16b4aa"/>
<path d="M91.6,332.0C91.6,332.0 100.8,370.4 106.9,370.4C113.0,370.4 116.0,294.6 122.1,275.6C128.2,256.6 131.3,256.6 137.4,256.6C143.5,256.6 146.6,282.7 152.7,282.7C158.8,282.7 161.8,250.2 167.9,250.2C174.1,250.2 177.1,284.8 183.2,289.0C189.3,293.2 192.4,293.2 198.5,293.2C204.6,293.2 207.7,253.1 213.8,253.1C219.9,253.1 222.9,273.5 229.0,273.5C235.1,273.5 238.2,243.2 244.3,243.2C250.4,243.2 253.5,252.5 259.6,258.3C265.7,264.1 268.7,267.3 274.8,272.4C280.9,277.5 284.0,283.7 290.1,283.7C296.2,283.7 299.3,273.2 305.4,268.5C311.5,263.8 314.5,260.4 320.6,260.4C326.8,260.4 329.8,297.4 335.9,297.4C342.0,297.4 345.1,277.0 351.2,277.0C357.3,277.0 360.4,296.4 366.5,296.4C372.6,296.4 375.6,239.7 381.7,239.7C387.8,239.7 390.9,250.6 397.0,255.5C403.1,260.4 406.2,264.3 412.3,264.3C418.4,264.3 421.4,256.6 427.5,256.6C433.6,256.6 436.7,275.6 442.8,275.6C448.9,275.6 452.0,264.7 458.1,264.7C464.2,264.7 467.2,311.9 473.4,311.9C479.5,311.9 482.5,311.9 488.6,306.2C494.7,300.5 497.8,286.7 503.9,278.4C510.0,270.1 513.1,270.5 519.2,264.7C525.3,258.9 534.4,249.5 534.4,249.5" fill="none" stroke="#fdd900" stroke-width="1.5" stroke-linejoin="round" stroke-linecap="round"/><circle cx="91.6" cy="332.0" r="2.3" fill="#fdd900"/><circle cx="106.9" cy="370.4" r="2.3" fill="#fdd900"/><circle cx="122.1" cy="275.6" r="2.3" fill="#fdd900"/><circle cx="137.4" cy="256.6" r="2.3" fill="#fdd900"/><circle cx="152.7" cy="282.7" r="2.3" fill="#fdd900"/><circle cx="167.9" cy="250.2" r="2.3" fill="#fdd900"/><circle cx="183.2" cy="289.0" r="2.3" fill="#fdd900"/><circle cx="198.5" cy="293.2" r="2.3" fill="#fdd900"/><circle cx="213.8" cy="253.1" r="2.3" fill="#fdd900"/><circle cx="229.0" cy="273.5" r="2.3" fill="#fdd900"/><circle cx="244.3" cy="243.2" r="2.3" fill="#fdd900"/><circle cx="259.6" cy="258.3" r="2.3" fill="#fdd900"/><circle cx="274.8" cy="272.4" r="2.3" fill="#fdd900"/><circle cx="290.1" cy="283.7" r="2.3" fill="#fdd900"/><circle cx="305.4" cy="268.5" r="2.3" fill="#fdd900"/><circle cx="320.6" cy="260.4" r="2.3" fill="#fdd900"/><circle cx="335.9" cy="297.4" r="2.3" fill="#fdd900"/><circle cx="351.2" cy="277.0" r="2.3" fill="#fdd900"/><circle cx="366.5" cy="296.4" r="2.3" fill="#fdd900"/><circle cx="381.7" cy="239.7" r="2.3" fill="#fdd900"/><circle cx="397.0" cy="255.5" r="2.3" fill="#fdd900"/><circle cx="412.3" cy="264.3" r="2.3" fill="#fdd900"/><circle cx="427.5" cy="256.6" r="2.3" fill="#fdd900"/><circle cx="442.8" cy="275.6" r="2.3" fill="#fdd900"/><circle cx="458.1" cy="264.7" r="2.3" fill="#fdd900"/><circle cx="473.4" cy="311.9" r="2.3" fill="#fdd900"/><circle cx="488.6" cy="306.2" r="2.3" fill="#fdd900"/><circle cx="503.9" cy="278.4" r="2.3" fill="#fdd900"/><circle cx="519.2" cy="264.7" r="2.3" fill="#fdd900"/><circle cx="534.4" cy="249.5" r="2.3" fill="#fdd900"/>
</svg>
<span class="t" style="top:383.21px;font-size:7.9px;line-height:7.9px;font-weight:400;color:#2a2a2a;-webkit-text-stroke:0.4px #2a2a2a;left:2.20px;width:300px;text-align:center;transform:scaleX(1.125);transform-origin:center center;">Sep 3</span>
<span class="t" style="top:383.21px;font-size:7.9px;line-height:7.9px;font-weight:400;color:#2a2a2a;-webkit-text-stroke:0.4px #2a2a2a;left:109.30px;width:300px;text-align:center;transform:scaleX(1.135);transform-origin:center center;">Sep 10</span>
<span class="t" style="top:383.21px;font-size:7.9px;line-height:7.9px;font-weight:400;color:#2a2a2a;-webkit-text-stroke:0.4px #2a2a2a;left:216.30px;width:300px;text-align:center;transform:scaleX(1.135);transform-origin:center center;">Sep 17</span>
<span class="t" style="top:383.21px;font-size:7.9px;line-height:7.9px;font-weight:400;color:#2a2a2a;-webkit-text-stroke:0.4px #2a2a2a;left:323.00px;width:300px;text-align:center;transform:scaleX(1.167);transform-origin:center center;">Sep 24</span>
<section class="abs panel" style="left:572px;top:156px;width:243.500px;height:249px">
<div class="abs hd" style="height:25px"></div>
</section>
<span class="t" style="top:164.60px;font-size:9.8px;line-height:9.8px;font-weight:400;color:#262626;-webkit-text-stroke:0.35px #262626;left:582.30px;transform:scaleX(1.086);transform-origin:left center;">Channel Breakdown</span>
<i class="q" style="left:684.7px;top:166.2px">?</i>
<span class="t" style="top:192.77px;font-size:8.9px;line-height:8.9px;font-weight:400;color:#262626;-webkit-text-stroke:0.3px #262626;left:459.60px;width:300px;text-align:center;transform:scaleX(0.996);transform-origin:center center;">Search</span>
<i class="ul" style="left:584.5px;top:205.400px;width:50.500px;background:#16b4aa"></i>
<span class="t" style="top:192.77px;font-size:8.9px;line-height:8.9px;font-weight:400;color:#262626;-webkit-text-stroke:0.3px #262626;left:515.70px;width:300px;text-align:center;transform:scaleX(1.001);transform-origin:center center;">Social</span>
<i class="ul" style="left:640.5px;top:205.400px;width:50.500px;background:#f4693c"></i>
<span class="t" style="top:192.77px;font-size:8.9px;line-height:8.9px;font-weight:400;color:#262626;-webkit-text-stroke:0.3px #262626;left:571.60px;width:300px;text-align:center;transform:scaleX(1.017);transform-origin:center center;">Display</span>
<i class="ul" style="left:696.5px;top:205.400px;width:50.500px;background:#fdd900"></i>
<span class="t" style="top:192.77px;font-size:8.9px;line-height:8.9px;font-weight:400;color:#262626;-webkit-text-stroke:0.3px #262626;left:627.40px;width:300px;text-align:center;transform:scaleX(1.049);transform-origin:center center;">Email</span>
<i class="ul" style="left:752.5px;top:205.400px;width:50.500px;background:#17577a"></i>
<svg width="825" height="525" viewBox="0 0 825 525" style="left:0;top:0">
<rect x="584.1" y="240" width="10.400" height="26.4" fill="#fdd900"/><rect x="584.1" y="266.4" width="10.400" height="56.0" fill="#f4693c"/><rect x="584.1" y="322.4" width="10.400" height="54.9" fill="#16b4aa"/>
<rect x="618.8" y="240" width="10.400" height="25.9" fill="#fdd900"/><rect x="618.8" y="265.9" width="10.400" height="57.0" fill="#f4693c"/><rect x="618.8" y="322.9" width="10.400" height="54.4" fill="#16b4aa"/>
<rect x="653.4" y="240" width="10.400" height="25.4" fill="#fdd900"/><rect x="653.4" y="265.4" width="10.400" height="54.0" fill="#f4693c"/><rect x="653.4" y="319.4" width="10.400" height="57.9" fill="#16b4aa"/>
<rect x="688.1" y="240" width="10.400" height="26.9" fill="#fdd900"/><rect x="688.1" y="266.9" width="10.400" height="55.5" fill="#f4693c"/><rect x="688.1" y="322.4" width="10.400" height="54.9" fill="#16b4aa"/>
<rect x="722.8" y="240" width="10.400" height="25.4" fill="#fdd900"/><rect x="722.8" y="265.4" width="10.400" height="56.5" fill="#f4693c"/><rect x="722.8" y="321.9" width="10.400" height="55.4" fill="#16b4aa"/>
<rect x="757.4" y="240" width="10.400" height="44.2" fill="#fdd900"/><rect x="757.4" y="284.2" width="10.400" height="47.1" fill="#f4693c"/><rect x="757.4" y="331.3" width="10.400" height="46.0" fill="#16b4aa"/>
<rect x="792.1" y="240" width="10.400" height="26.9" fill="#fdd900"/><rect x="792.1" y="266.9" width="10.400" height="55.0" fill="#f4693c"/><rect x="792.1" y="321.9" width="10.400" height="55.4" fill="#16b4aa"/>
</svg>
<span class="t" style="top:381.90px;font-size:7.8px;line-height:7.8px;font-weight:400;color:#262626;-webkit-text-stroke:0.35px #262626;left:439.30px;width:300px;text-align:center;transform:scaleX(1.022);transform-origin:center center;">Cost</span>
<span class="t" style="top:393.10px;font-size:7.8px;line-height:7.8px;font-weight:400;color:#262626;-webkit-text-stroke:0.35px #262626;left:439.30px;width:300px;text-align:center;transform:scaleX(1.045);transform-origin:center center;">$4.4K</span>
<span class="t" style="top:381.90px;font-size:7.8px;line-height:7.8px;font-weight:400;color:#262626;-webkit-text-stroke:0.35px #262626;left:473.97px;width:300px;text-align:center;transform:scaleX(1.136);transform-origin:center center;">Imps</span>
<span class="t" style="top:393.10px;font-size:7.8px;line-height:7.8px;font-weight:400;color:#262626;-webkit-text-stroke:0.35px #262626;left:473.97px;width:300px;text-align:center;transform:scaleX(1.041);transform-origin:center center;">134.69M</span>
<span class="t" style="top:381.90px;font-size:7.8px;line-height:7.8px;font-weight:400;color:#262626;-webkit-text-stroke:0.35px #262626;left:508.64px;width:300px;text-align:center;transform:scaleX(1.112);transform-origin:center center;">Click</span>
<span class="t" style="top:393.10px;font-size:7.8px;line-height:7.8px;font-weight:400;color:#262626;-webkit-text-stroke:0.35px #262626;left:508.64px;width:300px;text-align:center;transform:scaleX(1.036);transform-origin:center center;">365.7K</span>
<span class="t" style="top:381.90px;font-size:7.8px;line-height:7.8px;font-weight:400;color:#262626;-webkit-text-stroke:0.35px #262626;left:543.31px;width:300px;text-align:center;transform:scaleX(1.049);transform-origin:center center;">Conv</span>
<span class="t" style="top:393.10px;font-size:7.8px;line-height:7.8px;font-weight:400;color:#262626;-webkit-text-stroke:0.35px #262626;left:543.31px;width:300px;text-align:center;transform:scaleX(1.003);transform-origin:center center;">7.1K</span>
<span class="t" style="top:381.90px;font-size:7.8px;line-height:7.8px;font-weight:400;color:#262626;-webkit-text-stroke:0.35px #262626;left:577.98px;width:300px;text-align:center;transform:scaleX(1.002);transform-origin:center center;">Rev</span>
<span class="t" style="top:393.10px;font-size:7.8px;line-height:7.8px;font-weight:400;color:#262626;-webkit-text-stroke:0.35px #262626;left:577.98px;width:300px;text-align:center;transform:scaleX(1.036);transform-origin:center center;">$23.5K</span>
<span class="t" style="top:381.90px;font-size:7.8px;line-height:7.8px;font-weight:400;color:#262626;-webkit-text-stroke:0.35px #262626;left:612.65px;width:300px;text-align:center;transform:scaleX(0.977);transform-origin:center center;">ROAS</span>
<span class="t" style="top:393.10px;font-size:7.8px;line-height:7.8px;font-weight:400;color:#262626;-webkit-text-stroke:0.35px #262626;left:613.15px;width:300px;text-align:center;transform:scaleX(1.066);transform-origin:center center;">533.86%</span>
<span class="t" style="top:381.90px;font-size:7.8px;line-height:7.8px;font-weight:400;color:#262626;-webkit-text-stroke:0.35px #262626;left:647.32px;width:300px;text-align:center;transform:scaleX(1.022);transform-origin:center center;">7.1K</span>
<section class="abs panel" style="left:62px;top:413.400px;width:502.500px;height:120px">
<div class="abs hd" style="height:24px"></div>
</section>
<span class="t" style="top:421.27px;font-size:9.6px;line-height:9.6px;font-weight:400;color:#262626;-webkit-text-stroke:0.35px #262626;left:72.60px;transform:scaleX(1.104);transform-origin:left center;">Site &amp; Social Activity</span>
<i class="q" style="left:174.6px;top:422.6px">?</i>
<span class="t" style="top:449.22px;font-size:8.6px;line-height:8.6px;font-weight:400;color:#a0a0a0;left:-32.60px;width:300px;text-align:center;transform:scaleX(0.972);transform-origin:center center;">Sessions</span>
<i class="ul" style="left:92.2px;top:462.400px;width:49.3px;background:#f1f1f1"></i>
<span class="t" style="top:449.22px;font-size:8.6px;line-height:8.6px;font-weight:400;color:#a0a0a0;left:23.70px;width:300px;text-align:center;transform:scaleX(1.036);transform-origin:center center;">Bounce Rate</span>
<i class="ul" style="left:147.6px;top:462.400px;width:52.3px;background:#f1f1f1"></i>
<span class="t" style="top:449.22px;font-size:8.6px;line-height:8.6px;font-weight:400;color:#a0a0a0;left:80.60px;width:300px;text-align:center;transform:scaleX(1.046);transform-origin:center center;">New Visitors</span>
<i class="ul" style="left:205.3px;top:462.400px;width:50.6px;background:#f1f1f1"></i>
<span class="t" style="top:449.22px;font-size:8.6px;line-height:8.6px;font-weight:400;color:#a0a0a0;left:146.80px;width:300px;text-align:center;transform:scaleX(1.001);transform-origin:center center;">Pages per Session</span>
<i class="ul" style="left:260.3px;top:462.400px;width:73.0px;background:#f1f1f1"></i>
<span class="t" style="top:449.22px;font-size:8.6px;line-height:8.6px;font-weight:400;color:#a0a0a0;left:222.30px;width:300px;text-align:center;transform:scaleX(1.036);transform-origin:center center;">Session Duration</span>
<i class="ul" style="left:338px;top:462.400px;width:68.6px;background:#f1f1f1"></i>
<span class="t" style="top:449.22px;font-size:8.6px;line-height:8.6px;font-weight:400;color:#a0a0a0;left:287.00px;width:300px;text-align:center;transform:scaleX(0.999);transform-origin:center center;">Post Likes</span>
<i class="ul" style="left:412.3px;top:462.400px;width:49.6px;background:#f1f1f1"></i>
<span class="t" style="top:449.22px;font-size:8.6px;line-height:8.6px;font-weight:400;color:#a0a0a0;left:342.60px;width:300px;text-align:center;transform:scaleX(0.997);transform-origin:center center;">Page Likes</span>
<i class="ul" style="left:467.7px;top:462.400px;width:50.2px;background:#f1f1f1"></i>
<i class="abs" style="left:523.2px;top:453.400px;width:2.500px;height:2.500px;border-radius:50%;background:#111"></i>
<i class="abs" style="left:527.7px;top:453.400px;width:2.500px;height:2.500px;border-radius:50%;background:#111"></i>
<i class="abs" style="left:532.2px;top:453.400px;width:2.500px;height:2.500px;border-radius:50%;background:#111"></i>
<section class="abs panel" style="left:572px;top:413.400px;width:243.500px;height:120px">
<div class="abs hd" style="height:24px"></div>
</section>
<span class="t" style="top:421.07px;font-size:9.6px;line-height:9.6px;font-weight:400;color:#262626;-webkit-text-stroke:0.35px #262626;left:582.30px;transform:scaleX(1.082);transform-origin:left center;">Assisting Channels</span>
<i class="q" style="left:677.2px;top:422.6px">?</i>
<span class="t" style="top:449.12px;font-size:8.6px;line-height:8.6px;font-weight:400;color:#a0a0a0;left:459.60px;width:300px;text-align:center;transform:scaleX(1.028);transform-origin:center center;">Search</span>
<i class="ul" style="left:584.5px;top:462.400px;width:50.500px;background:#f1f1f1"></i>
<span class="t" style="top:449.12px;font-size:8.6px;line-height:8.6px;font-weight:400;color:#a0a0a0;left:515.70px;width:300px;text-align:center;transform:scaleX(1.034);transform-origin:center center;">Social</span>
<i class="ul" style="left:640.5px;top:462.400px;width:50.500px;background:#f1f1f1"></i>
<span class="t" style="top:449.12px;font-size:8.6px;line-height:8.6px;font-weight:400;color:#a0a0a0;left:571.60px;width:300px;text-align:center;transform:scaleX(1.050);transform-origin:center center;">Display</span>
<i class="ul" style="left:696.5px;top:462.400px;width:50.500px;background:#f1f1f1"></i>
<span class="t" style="top:449.12px;font-size:8.6px;line-height:8.6px;font-weight:400;color:#a0a0a0;left:627.40px;width:300px;text-align:center;transform:scaleX(1.084);transform-origin:center center;">Email</span>
<i class="ul" style="left:752.5px;top:462.400px;width:50.500px;background:#f1f1f1"></i>
<div class="abs" style="left:822.4px;top:84px;width:1.4px;height:166px;background:#b4c5cb;border-radius:1px"></div>
<footer class="abs" style="left:55px;top:497px;width:770px;height:28px;background:#fdfdfd;box-shadow:0 -4px 8px 4px #fdfdfd"></footer>
<div class="abs" style="left:150px;top:524px;width:490px;height:6px;border-radius:50%;box-shadow:0 0 8px 3px rgba(0,0,0,0.10);background:rgba(0,0,0,0.06)"></div>
<span class="t" style="top:504.87px;font-size:8.3px;line-height:8.3px;font-weight:400;color:#a0a0a0;left:365.80px;transform:scaleX(1.170);transform-origin:left center;">&#169;2017 Powered by Albert Tech Ltd.</span>
<span class="t" style="top:504.87px;font-size:8.3px;line-height:8.3px;font-weight:400;color:#222;left:524.30px;transform:scaleX(1.166);transform-origin:left center;text-decoration:underline;">Albert.ai</span>
<span class="t" style="top:504.87px;font-size:8.3px;line-height:8.3px;font-weight:400;color:#a0a0a0;left:565.90px;transform:scaleX(0.901);transform-origin:left center;">v1</span>
</div></body></html>
